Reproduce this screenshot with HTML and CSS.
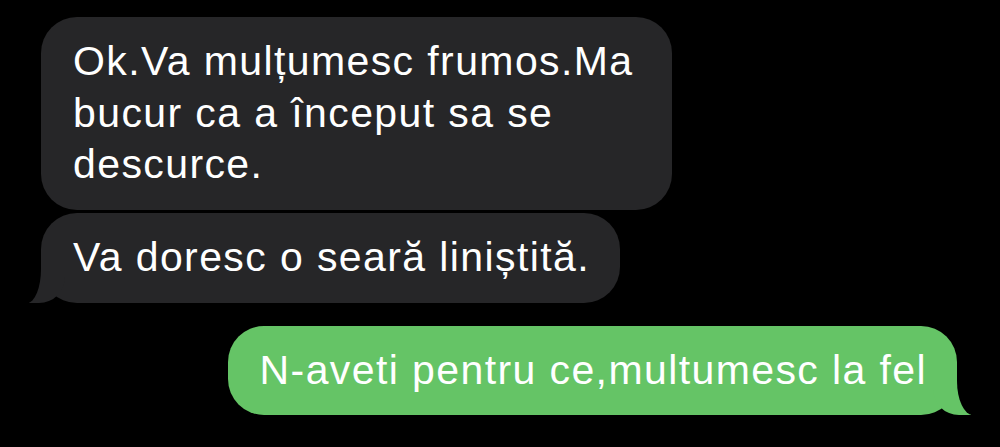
FILE: index.html
```html
<!DOCTYPE html>
<html lang="ro">
<head>
    <meta charset="UTF-8">
    <meta name="viewport" content="width=device-width, initial-scale=1.0">
    <title>Mesaje</title>
    <link rel="stylesheet" href="styles.css">
</head>
<body>
    <div class="chat">
        <div class="msg them">Ok.Va mulțumesc frumos.Ma bucur ca a început sa se descurce.</div>
        <div class="msg them tail">Va doresc o seară liniștită.</div>
        <div class="msg me tail">N-aveti pentru ce,multumesc la fel</div>
    </div>
</body>
</html>
```

FILE: styles.css
```css
body {
    margin: 0;
    background-color: #000;
    font-family: "Liberation Sans", Arial, sans-serif;
    overflow: hidden;
}

.chat {
    display: flex;
    flex-direction: column;
    align-items: flex-start;
    padding: 17px 43px 0 41px;
}

.msg {
    position: relative;
    font-size: 41px;
    line-height: 51.5px;
    letter-spacing: 1.4px;
    padding: 19px 30px 19px 32px;
    border-radius: 36px;
    color: #fff;
}

.them {
    background-color: #262628;
    max-width: 569px;
}

.them + .them {
    margin-top: 3.5px;
}

.me {
    align-self: flex-end;
    margin-top: 23px;
    background-color: #65c466;
}

/* tail of the bubble */
.tail::before,
.tail::after {
    content: "";
    position: absolute;
    bottom: 0;
    height: 36px;
}

.them.tail::before {
    left: -12px;
    width: 36px;
    background-color: #262628;
    border-bottom-right-radius: 26px;
}

.them.tail::after {
    left: -30px;
    width: 30px;
    background-color: #000;
    border-bottom-right-radius: 14px 34px;
}

.me.tail::before {
    right: -14px;
    width: 38px;
    background-color: #65c466;
    border-bottom-left-radius: 26px;
}

.me.tail::after {
    right: -30px;
    width: 30px;
    background-color: #000;
    border-bottom-left-radius: 16px 34px;
}
```
